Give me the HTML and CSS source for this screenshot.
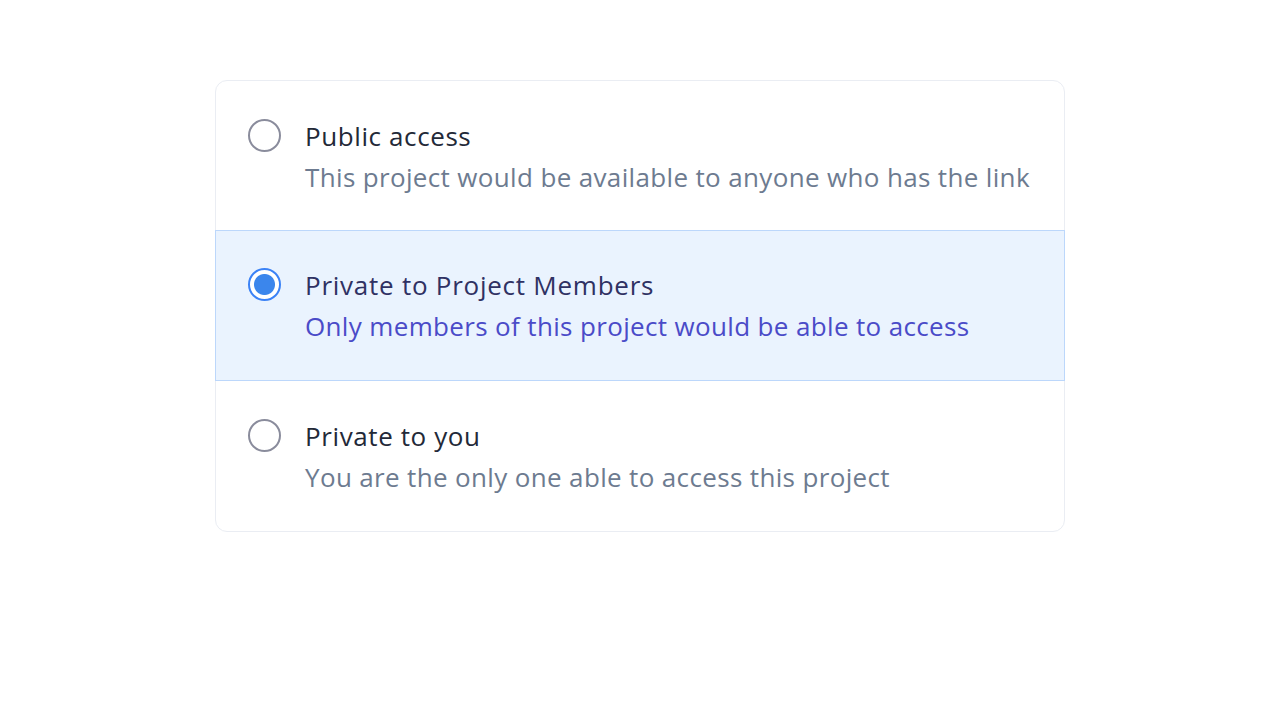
FILE: index.html
```html
<!DOCTYPE html>
<html lang="en">
<head>
<meta charset="utf-8">
<title>Project access</title>
<link rel="stylesheet" href="styles.css">
</head>
<body>
<main class="page">
  <div class="options" role="radiogroup">
    <label class="option">
      <span class="radio"></span>
      <span class="text">
        <span class="title">Public access</span>
        <span class="desc">This project would be available to anyone who has the link</span>
      </span>
    </label>
    <label class="option selected">
      <span class="radio checked"></span>
      <span class="text">
        <span class="title">Private to Project Members</span>
        <span class="desc">Only members of this project would be able to access</span>
      </span>
    </label>
    <label class="option">
      <span class="radio"></span>
      <span class="text">
        <span class="title">Private to you</span>
        <span class="desc">You are the only one able to access this project</span>
      </span>
    </label>
  </div>
</main>
</body>
</html>
```
FILE: styles.css
```css
* { box-sizing: border-box; }
html, body { margin: 0; padding: 0; background: #ffffff; }
body {
  font-family: "Open Sans", "Noto Sans", sans-serif;
  width: 1280px;
  height: 720px;
}
.page {
  display: flex;
  justify-content: center;
  padding-top: 80px;
}
.options {
  width: 850px;
  border: 1px solid #eaedf3;
  border-radius: 12px;
  display: flex;
  flex-direction: column;
}
.option {
  height: 150px;
  display: flex;
  align-items: flex-start;
  gap: 24px;
  padding: 37px 32px 0 32px;
}
.option:first-child { height: 149px; }
.option.selected {
  background: #eaf3fe;
  border: 1px solid #bcd7fb;
  margin: 0 -1px;
  height: 151px;
  padding: 36px 32px 0 32px;
}
.radio {
  flex: none;
  width: 33px;
  height: 33px;
  border-radius: 50%;
  border: 2px solid #8a8c9c;
  background: #fff;
  margin-top: 1px;
}
.radio.checked {
  border-color: #3b82f6;
  background: radial-gradient(circle, #3b86ec 0 10px, #ffffff 11px);
}
.text {
  display: flex;
  flex-direction: column;
}
.title {
  font-size: 26px;
  line-height: 36px;
  letter-spacing: 0.6px;
  color: #232938;
  font-weight: 500;
}
.desc {
  font-size: 26px;
  line-height: 46px;
  letter-spacing: 0.35px;
  color: #6d7b90;
}
.selected .title { color: #2f3163; letter-spacing: 0.75px; }
.selected .desc { color: #4a4bc8; }
```
